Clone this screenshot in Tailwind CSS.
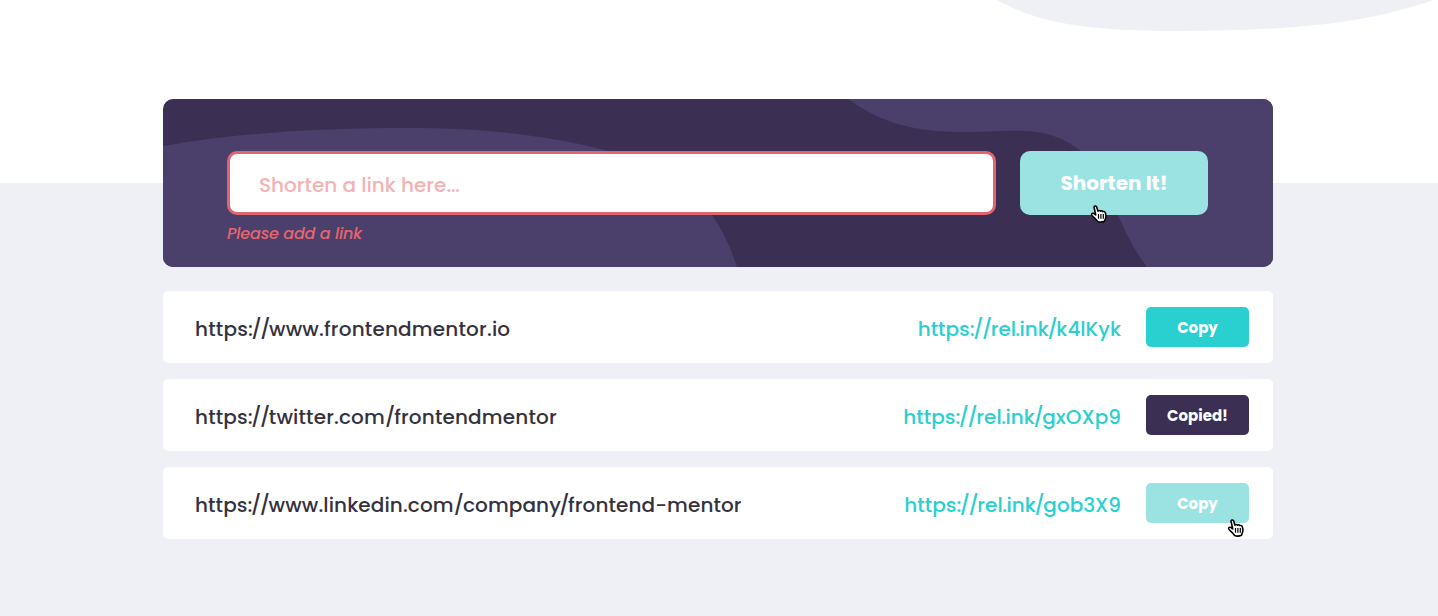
<!DOCTYPE html>
<html lang="en">
<head>
<meta charset="utf-8">
<title>Shortly</title>
<script src="https://cdn.jsdelivr.net/npm/@tailwindcss/browser@4"></script>
</head>
<body class="font-[Poppins,Inter,sans-serif]">
<svg class="hidden">
  <symbol id="hand" viewBox="0 0 17 19">
    <path d="M4.100 2.500C3.700.9 6.200.4 6.700 2.100L7.900 6.100C8.600 5.300 10 5.400 10.400 6.200C11.200 5.600 12.400 5.800 12.800 6.600C14 6.200 15.100 6.700 15.400 7.900L15.900 10.500C16.200 12.700 15.300 14.300 14.400 16.300C12.500 17.200 9.500 17.300 7.600 16.500C6.300 14.600 4.500 12.800 3.100 11.600C2.100 10.700 1.200 9.800 1.700 8.900C2.300 7.900 3.900 8.300 4.700 9.100L5.700 9.900Z" fill="#fff" stroke="#000" stroke-width="1.600" stroke-linejoin="round"/>
    <path d="M8.500 9v4.700M10.900 9v4.700M13.300 9v4.700" stroke="#000" stroke-width="1.200" fill="none"/>
  </symbol>
</svg>
<main class="relative h-[616px] overflow-hidden bg-[linear-gradient(#fff_183px,#eff0f6_183px)] pt-[99px] pl-[163px]">
  <svg class="absolute top-0 left-0" width="1438" height="60" viewBox="0 0 1438 60"><path d="M997 0C1040 24 1090 31 1180 31C1290 31 1370 23 1433 0Z" fill="#eff0f6"/></svg>

  <section class="relative flex h-[168px] w-[1110px] gap-6 overflow-hidden rounded-[10px] bg-[#3b3054] px-16 pt-[52px]">
    <svg class="absolute top-0 left-0" width="1110" height="168" viewBox="0 0 1110 168" fill="#4b3f6b">
      <path d="M0 47C70 34 160 29 244 29C325 29 390 37 450 53C495 66 525 84 549 116C560 132 568 149 574 168H0Z"/>
      <path d="M685 0C718 24 752 33 800 33C825 33 840 31 862 32C888 33 903 41 918 52C940 70 945 90 955 116C963 135 972 152 984 168H1110V0Z"/>
    </svg>
    <div class="relative w-[769px]">
      <div class="flex h-16 items-center rounded-[10px] border-3 border-[#e2656d] bg-white px-[29px] pt-[3px] text-[20px] whitespace-nowrap text-[#f4b2b4]"><span class="font-medium">Shorten a link here<span class="tracking-[-0.5px]">...</span></span></div>
      <p class="mt-[7px] text-[16px] leading-6 font-medium tracking-[-0.2px] whitespace-nowrap text-[#e8656d] italic"><span>Please add a link</span></p>
    </div>
    <button class="relative h-16 w-[188px] rounded-[10px] bg-[#9be3e2] text-[20px] font-bold whitespace-nowrap text-white"><span>Shorten It!</span>
      <svg class="absolute top-[54px] left-[70px]" width="17" height="19"><use href="#hand"/></svg>
    </button>
  </section>

  <ul class="mt-6 flex w-[1110px] flex-col gap-4 text-[20px] leading-[30px] font-medium whitespace-nowrap">
    <li class="flex h-[72px] items-center rounded-[5px] bg-white pr-6 pl-8">
      <span class="mt-1 tracking-[0.18px] text-[#35323e]">https<span class="tracking-[-1.5px]">://</span>www.frontendmentor.io</span>
      <span class="mt-1 mr-[25px] ml-auto text-[#2acfcf]">https<span class="tracking-[-1.5px]">://</span>re<span class="tracking-[-0.7px]">l.</span>in<span class="tracking-[-1.4px]">k/</span>k4lKyk</span>
      <button class="h-10 w-[103px] rounded-[5px] bg-[#2acfcf] pt-0.5 text-[15px] font-bold text-white"><span>Copy</span></button>
    </li>
    <li class="flex h-[72px] items-center rounded-[5px] bg-white pr-6 pl-8">
      <span class="mt-1 tracking-[0.15px] text-[#35323e]">https<span class="tracking-[-1.5px]">://</span>twitter.com<span class="tracking-[-1px]">/</span>frontendmentor</span>
      <span class="mt-1 mr-[25px] ml-auto text-[#2acfcf]">https<span class="tracking-[-1.5px]">://</span>re<span class="tracking-[-0.5px]">l.</span>in<span class="tracking-[-1.4px]">k/</span>gxOXp9</span>
      <button class="h-10 w-[103px] rounded-[5px] bg-[#3b3054] pt-0.5 text-[15px] font-bold text-white"><span>Copied!</span></button>
    </li>
    <li class="flex h-[72px] items-center rounded-[5px] bg-white pr-6 pl-8">
      <span class="mt-1 tracking-[0.1px] text-[#35323e]">https<span class="tracking-[-1.5px]">://</span>www.linkedin.com<span class="tracking-[-1px]">/</span>compan<span class="tracking-[-1.5px]">y/</span>frontend-mentor</span>
      <span class="mt-1 mr-[25px] ml-auto text-[#2acfcf]">https<span class="tracking-[-1.5px]">://</span>re<span class="tracking-[-0.5px]">l.</span>in<span class="tracking-[-1.4px]">k/</span>gob3X9</span>
      <button class="relative h-10 w-[103px] rounded-[5px] bg-[#9be3e2] pt-0.5 text-[15px] font-bold text-white"><span>Copy</span>
        <svg class="absolute top-9 left-[81px]" width="17" height="19"><use href="#hand"/></svg>
      </button>
    </li>
  </ul>
</main>
</body>
</html>
